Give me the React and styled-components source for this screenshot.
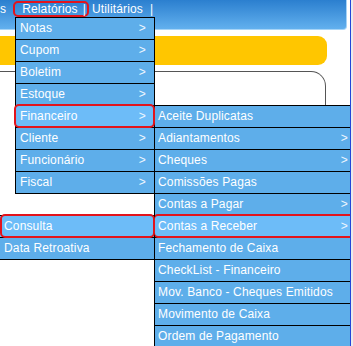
import React from 'react';
import styled, { createGlobalStyle, css } from 'styled-components';

const GlobalStyle = createGlobalStyle`
  html, body { margin: 0; padding: 0; background: #fff; overflow: hidden; }
  body { font-family: "Liberation Sans", Arial, sans-serif; }
`;

const Frame = styled.div`
  display: flex;
  width: 353px;
  height: 346px;
  overflow: hidden;
`;

const Viewport = styled.div`
  position: relative;
  flex: 0 0 350px;
  height: 100%;
  overflow: hidden;
  background: #fff;
`;

const Edge = styled.div`
  flex: 1;
  border-left: 1px solid #2445d8;
  background: #ececec;
`;

const TopBar = styled.nav`
  box-sizing: border-box;
  width: 347px;
  height: 30px;
  background: linear-gradient(#2b7fcf, #62b0ee);
  border-bottom: 1px solid #a6d4f7;
  border-right: 1px solid #a6d4f7;
  border-bottom-right-radius: 4px;
  display: flex;
  align-items: flex-start;
  font-size: 12px;
  letter-spacing: 0.15px;
  color: #fff;
`;

const NavItem = styled.div`
  display: flex;
  align-items: center;
  box-sizing: border-box;
  height: 16px;
  margin-top: 1px;
  margin-left: ${(p) => p.$gap}px;
  padding: 0 ${(p) => p.$pr || 0}px 0 ${(p) => p.$pl || 0}px;
  line-height: 12px;
  white-space: nowrap;
  border: 2px solid ${(p) => (p.$active ? '#e3141c' : 'transparent')};
  border-radius: 5px;
`;

const Sep = styled.span`
  margin-left: ${(p) => p.$gap}px;
`;

const YellowBar = styled.div`
  width: 327px;
  height: 29px;
  margin-top: 6px;
  background: #ffc600;
  border-radius: 0 9px 9px 0;
`;

const Card = styled.div`
  box-sizing: border-box;
  width: 326px;
  height: 400px;
  margin-top: 6px;
  border: 1px solid #555;
  border-left: none;
  border-radius: 0 15px 0 0;
`;

const Menu = styled.ul`
  position: absolute;
  left: ${(p) => p.$left}px;
  top: ${(p) => p.$top}px;
  width: ${(p) => p.$width}px;
  z-index: ${(p) => p.$z || 1};
  margin: 0;
  padding: 0;
  list-style: none;
  box-sizing: border-box;
  border: 1px solid #000;
  border-bottom: none;
  font-size: 12px;
  letter-spacing: 0.15px;
  color: #fff;
`;

const Row = styled.li`
  position: relative;
  display: flex;
  justify-content: space-between;
  height: 21px;
  line-height: 21px;
  padding: 0 8px 0 ${(p) => p.$pl}px;
  background: ${(p) => (p.$active ? '#6dbcf8' : '#5eaeea')};
  border-bottom: 1px solid #000;
  white-space: nowrap;
  ${(p) =>
    p.$active &&
    css`
      &::after {
        content: '';
        position: absolute;
        top: -2px;
        left: ${p.$ringLeft ?? -2}px;
        right: -1px;
        bottom: -1px;
        border: 2px solid #e3141c;
        border-radius: 5px;
        pointer-events: none;
      }
    `}
`;

const Arrow = styled.span`
  color: #eef6ff;
`;

const mainItems = [
  'Notas',
  'Cupom',
  'Boletim',
  'Estoque',
  'Financeiro',
  'Cliente',
  'Funcionário',
  'Fiscal',
];

const subItems = [
  ['Aceite Duplicatas', false],
  ['Adiantamentos', true],
  ['Cheques', true],
  ['Comissões Pagas', false],
  ['Contas a Pagar', true],
  ['Contas a Receber', true],
  ['Fechamento de Caixa', false],
  ['CheckList - Financeiro', false],
  ['Mov. Banco - Cheques Emitidos', false],
  ['Movimento de Caixa', false],
  ['Ordem de Pagamento', false],
];

export default function App() {
  return (
    <>
      <GlobalStyle />
      <Frame>
        <Viewport>
          <TopBar>
            <NavItem $gap={-2}>s</NavItem>
            <NavItem $gap={5} $pl={7} $pr={1} $active>
              Relatórios<Sep $gap={5}>|</Sep>
            </NavItem>
            <NavItem $gap={1}>
              Utilitários<Sep $gap={7}>|</Sep>
            </NavItem>
          </TopBar>
          <YellowBar />
          <Card />

          <Menu $left={15} $top={17} $width={140} $z={3}>
            {mainItems.map((t) => (
              <Row key={t} $pl={4} $active={t === 'Financeiro'}>
                <span>{t}</span>
                <Arrow>&gt;</Arrow>
              </Row>
            ))}
          </Menu>

          <Menu $left={154} $top={105} $width={203} $z={1}>
            {subItems.map(([t, arrow]) => (
              <Row key={t} $pl={3} $active={t === 'Contas a Receber'}>
                <span>{t}</span>
                {arrow && <Arrow>&gt;</Arrow>}
              </Row>
            ))}
          </Menu>

          <Menu $left={-1} $top={215} $width={156} $z={2}>
            <Row $pl={4} $active $ringLeft={0}>
              <span>Consulta</span>
            </Row>
            <Row $pl={4}>
              <span>Data Retroativa</span>
            </Row>
          </Menu>
        </Viewport>
        <Edge />
      </Frame>
    </>
  );
}
